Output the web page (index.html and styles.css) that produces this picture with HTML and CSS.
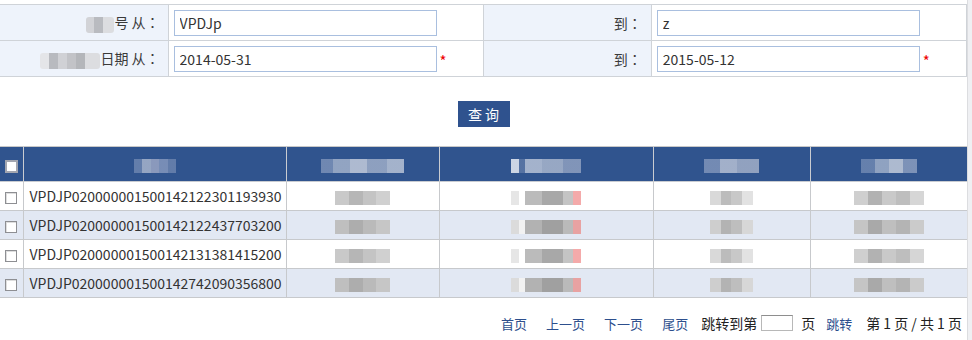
FILE: index.html
```html
<!DOCTYPE html>
<html>
<head>
<meta charset="utf-8">
<link rel="stylesheet" href="styles.css">
</head>
<body>
<div class="page">
  <div class="main">
    <table class="form">
      <tr>
        <td class="lbl"><span class="mos mos-a"></span>号 从：</td>
        <td class="val"><input class="txt" type="text" value="VPDJp"></td>
        <td class="lbl lbl2">到：</td>
        <td class="val"><input class="txt" type="text" value="z"></td>
      </tr>
      <tr>
        <td class="lbl"><span class="mos mos-b"></span>日期 从：</td>
        <td class="val"><input class="txt" type="text" value="2014-05-31"><span class="req">*</span></td>
        <td class="lbl lbl2">到：</td>
        <td class="val"><input class="txt" type="text" value="2015-05-12"><span class="req">*</span></td>
      </tr>
    </table>

    <div class="actions"><button class="btn">查 询</button></div>

    <table class="grid">
      <colgroup>
        <col class="c0"><col class="c1"><col class="c2"><col class="c3"><col class="c4"><col class="c5">
      </colgroup>
      <thead>
        <tr>
          <th><span class="cb cb-h"></span></th>
          <th><span class="hm hm1"></span></th>
          <th><span class="hm hm2"></span></th>
          <th><span class="hm hm3"></span></th>
          <th><span class="hm hm4"></span></th>
          <th><span class="hm hm5"></span></th>
        </tr>
      </thead>
      <tbody>
        <tr>
          <td><span class="cb"></span></td>
          <td class="id">VPDJP020000001500142122301193930</td>
          <td><span class="dm dm2"></span></td>
          <td><span class="dm dm3"></span></td>
          <td><span class="dm dm4"></span></td>
          <td><span class="dm dm5"></span></td>
        </tr>
        <tr class="alt">
          <td><span class="cb"></span></td>
          <td class="id">VPDJP020000001500142122437703200</td>
          <td><span class="dm dm2"></span></td>
          <td><span class="dm dm3"></span></td>
          <td><span class="dm dm4"></span></td>
          <td><span class="dm dm5"></span></td>
        </tr>
        <tr>
          <td><span class="cb"></span></td>
          <td class="id">VPDJP020000001500142131381415200</td>
          <td><span class="dm dm2"></span></td>
          <td><span class="dm dm3"></span></td>
          <td><span class="dm dm4"></span></td>
          <td><span class="dm dm5"></span></td>
        </tr>
        <tr class="alt">
          <td><span class="cb"></span></td>
          <td class="id">VPDJP020000001500142742090356800</td>
          <td><span class="dm dm2"></span></td>
          <td><span class="dm dm3"></span></td>
          <td><span class="dm dm4"></span></td>
          <td><span class="dm dm5"></span></td>
        </tr>
      </tbody>
    </table>

    <div class="pager">
      <a class="lnk">首页</a>
      <a class="lnk">上一页</a>
      <a class="lnk">下一页</a>
      <a class="lnk">尾页</a>
      <span class="plain p-go">跳转到第</span>
      <span class="pbox"></span>
      <span class="plain p-pg">页</span>
      <a class="lnk l-go">跳转</a>
      <span class="plain p-tot">第 1 页 / 共 1 页</span>
    </div>
  </div>
  <div class="edge"></div>
</div>
</body>
</html>
```

FILE: styles.css
```css
* { box-sizing: border-box; }
html, body { margin: 0; padding: 0; background: #fff; }
body {
  font-family: "Microsoft YaHei", "Noto Sans CJK SC", "Noto Sans", sans-serif;
  color: #333;
  font-size: 14px;
}
.page { display: flex; width: 972px; height: 340px; overflow: hidden; }
.main { width: 967px; padding-top: 4px; }
.edge { width: 5px; background: #eff0f3; border-left: 1px solid #dcdde0; }

.form { width: 967px; border-collapse: collapse; table-layout: fixed; }
.form td { height: 36px; border: 1px solid #cfd3d8; padding: 0; }
.form tr td:first-child { border-left: none; }
.form .lbl {
  background: #eef3fb; text-align: right; padding-right: 8px; width: 168px; white-space: nowrap;
  font-family: "Microsoft YaHei", "Noto Sans CJK TC", sans-serif; color: #3a3a3a;
}
.form .lbl2 { width: 168px; padding-right: 9px; }
.form .val { background: #fff; padding-left: 5px; width: 315px; }
.txt {
  width: 263px; height: 26px; border: 1px solid #a9bfdf; padding: 0 5px;
  font-family: inherit; font-size: 14px; color: #333; vertical-align: middle; outline: none;
}
.req { color: #e00; font-size: 15px; margin-left: 3px; vertical-align: -5px; line-height: 1; }

.mos { display: inline-block; height: 16px; vertical-align: middle; border-radius: 3px; }
.mos-a { width: 28px; background: linear-gradient(90deg, #d2d3d7 0 30%, #b9bbc0 30% 60%, #dcdde0 60%); }
.mos-b { width: 60px; background: linear-gradient(90deg, #e4e5e8 0 15%, #b8babf 15% 30%, #d0d1d5 30% 45%, #c2c3c7 45% 60%, #b4b6ba 60% 75%, #dcdde0 75%); }

.actions { display: flex; justify-content: center; padding: 24px 0 19px 0; }
.btn {
  width: 52px; height: 26px; background: #2f528e; color: #fff; border: none;
  font-family: inherit; font-size: 14px; padding: 0;
}

.grid { width: 967px; border-collapse: collapse; table-layout: fixed; }
.c0 { width: 23px; } .c1 { width: 263px; } .c2 { width: 153px; } .c3 { width: 214px; } .c4 { width: 157px; } .c5 { width: 157px; }
.grid th { height: 35px; background: #30548e; border: 1px solid #c9ccd1; border-top: 1px solid #c8c8c8; padding: 0; text-align: center; }
.grid th:first-child, .grid td:first-child { border-left: none; text-align: left; padding-left: 5px; }
.grid td { height: 29px; border: 1px solid #c7c9cc; padding: 0; text-align: center; }
.grid tr.alt td { background: #e2e8f3; }
.grid td.id { text-align: left; padding-left: 6px; color: #333; white-space: nowrap; }

.cb { display: inline-block; width: 12px; height: 12px; border: 1px solid #8e8f93; background: #fff; vertical-align: middle; box-shadow: inset 1px 1px 0 #dedede; }
.cb-h { width: 13px; height: 13px; border: 2px solid #a3a6b0; box-shadow: none; }

.hm { display: inline-block; height: 14px; vertical-align: middle; opacity: .85; }
.hm1 { width: 42px; background: linear-gradient(90deg, #6c85b0 0 20%, #a7b4cc 20% 40%, #9aa5c4 40% 60%, #8497bd 60% 80%, #6b83ae 80%); }
.hm2 { width: 83px; background: linear-gradient(90deg, #7b91b8 0 15%, #a3b2cb 15% 35%, #c4ccdc 35% 55%, #9eadc8 55% 80%, #b8c3d6 80%); }
.hm3 { width: 70px; background: linear-gradient(90deg, #e8ecf3 0 12%, #5d78a6 12% 20%, #b8c3d7 20% 45%, #a9b6cd 45% 75%, #8fa0c0 75%); }
.hm4 { width: 55px; background: linear-gradient(90deg, #7f94ba 0 30%, #b6c0d4 30% 60%, #a2afc8 60%); }
.hm5 { width: 56px; background: linear-gradient(90deg, #6f88b2 0 25%, #a0b0ca 25% 50%, #c3ccdb 50% 75%, #8a9dbf 75%); }

.dm { display: inline-block; height: 14px; vertical-align: middle; }
.dm2 { width: 55px; background: linear-gradient(90deg, #c9c9c9 0 25%, #b6b6b6 25% 50%, #c4c4c4 50% 75%, #d0d0d0 75%); }
.dm3 { width: 70px; background: linear-gradient(90deg, #e6e6e6 0 12%, #fff 12% 20%, #bbbbbb 20% 45%, #a8a8a8 45% 75%, #c4c4c4 75% 88%, #f4aaaa 88%); }
.dm4 { width: 43px; background: linear-gradient(90deg, #d9d9d9 0 25%, #bcbcbc 25% 50%, #c8c8c8 50% 75%, #e2e2e2 75%); }
.dm5 { width: 70px; background: linear-gradient(90deg, #cfcfcf 0 20%, #b2b2b2 20% 40%, #c9c9c9 40% 60%, #bebebe 60% 80%, #d6d6d6 80%); }
.alt .dm { filter: brightness(.95); }

.pager { display: flex; justify-content: flex-end; align-items: center; padding: 15px 5px 0 0; font-size: 13px; }
.pager .lnk { color: #2d4f8d; margin-left: 19px; text-decoration: none; }
.pager .lnk:first-child { margin-left: 0; }
.pager .plain { color: #222; font-size: 14px; }
.pager .p-go { margin-left: 13px; }
.pbox { width: 32px; height: 16px; border: 1px solid #b8b8b8; border-top-color: #8e8e8e; margin-left: 4px; background: #fff; }
.pager .p-pg { margin-left: 8px; }
.pager .l-go { margin-left: 11px; }
.pager .p-tot { margin-left: 14px; }
```
